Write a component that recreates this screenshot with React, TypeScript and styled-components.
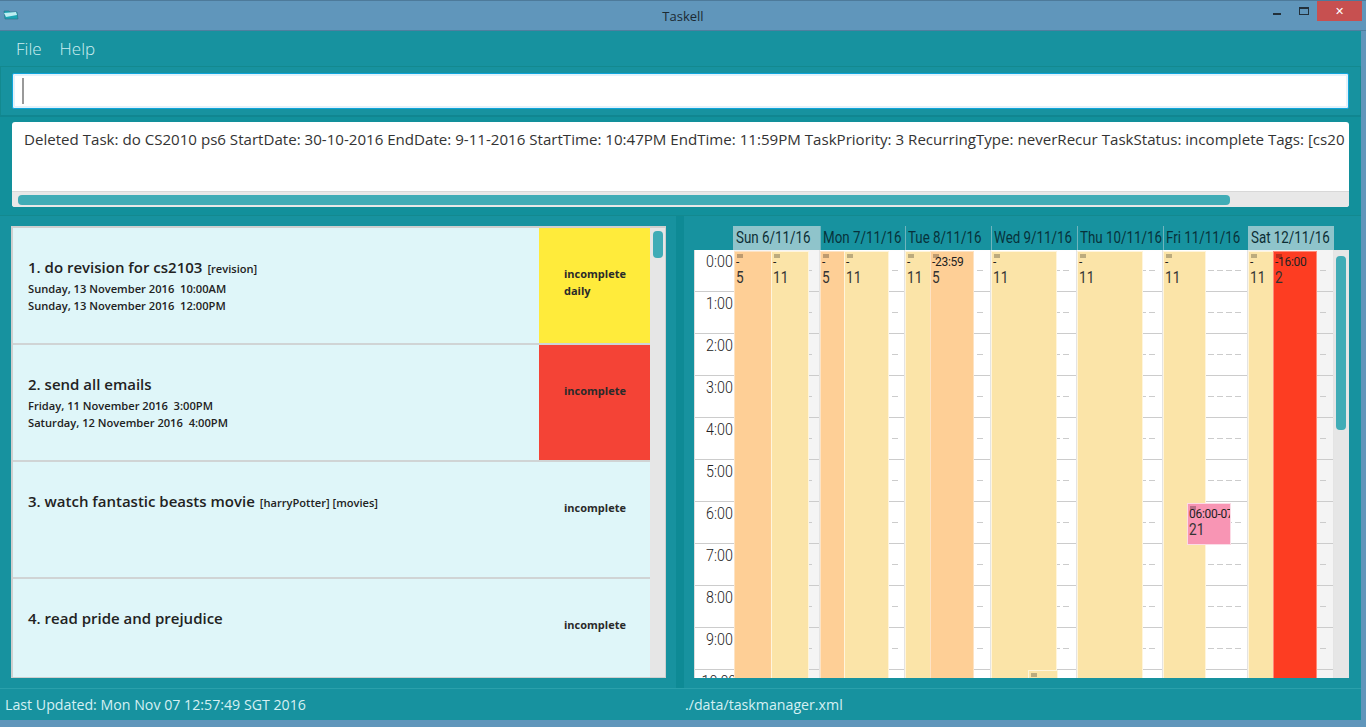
import { createGlobalStyle, styled } from "styled-components";

const GlobalStyle = createGlobalStyle`
  html, body { margin: 0; padding: 0; height: 100%; overflow: hidden; }
  body { font-family: "Open Sans", "Noto Sans", sans-serif; }
  * { box-sizing: border-box; }
`;

const Frame = styled.div`
  width: 1366px;
  height: 727px;
  background: #6096bb;
  display: flex;
  flex-direction: column;
  overflow: hidden;
`;

const TitleBar = styled.div`
  height: 31px;
  flex: none;
  position: relative;
  display: flex;
  align-items: center;
  justify-content: center;
  border-top: 1px solid #4d7a9a;
  border-bottom: 1px solid #4f7f9f;
  font-size: 13px;
  color: #1c2a33;
`;

const AppIcon = styled.svg`
  position: absolute;
  left: 3px;
  top: 8px;
`;

const WindowButtons = styled.div`
  position: absolute;
  right: 4px;
  top: 0;
  display: flex;
  align-items: flex-start;
`;

const MinButton = styled.div`
  width: 8px;
  height: 2px;
  background: #22303a;
  margin: 12px 18px 0 0;
`;

const MaxButton = styled.div`
  width: 10px;
  height: 8px;
  margin: 6px 8px 0 0;
  border: 1px solid #22303a;
  border-top-width: 2px;
`;

const CloseButton = styled.div`
  width: 45px;
  height: 20px;
  background: #c75050;
  color: #fff;
  font: 700 11px "DejaVu Sans", sans-serif;
  display: flex;
  align-items: center;
  justify-content: center;
`;

const Body = styled.div`
  width: 1361px;
  height: 689px;
  flex: none;
  background: #17929f;
  display: flex;
  flex-direction: column;
`;

const MenuBar = styled.div`
  height: 35px;
  flex: none;
  display: flex;
  align-items: center;
  gap: 18px;
  padding: 0 16px;
  font-size: 17px;
  font-weight: 300;
  color: #cdeef1;
`;

const CommandSection = styled.div`
  height: 49px;
  flex: none;
  padding: 6px 11px;
  border: 1px solid #13898f;
  border-width: 1px 1px 0 1px;
`;

const CommandInput = styled.div`
  height: 36px;
  background: #fff;
  border: 1px solid #0ea5dc;
  box-shadow: inset 0 0 0 2px #e3f2fa;
  border-radius: 2px;
  display: flex;
  align-items: center;
  padding-left: 9px;
`;

const Caret = styled.div`
  width: 2px;
  height: 26px;
  background: #999;
`;

const ResultSection = styled.div`
  height: 100px;
  flex: none;
  padding: 5px 12px 8px;
  background: #12909b;
  border-top: 2px solid #108690;
`;

const ResultBox = styled.div`
  height: 85px;
  background: #fff;
  border-radius: 3px;
  display: flex;
  flex-direction: column;
  overflow: hidden;
`;

const ResultText = styled.div`
  flex: 1;
  padding: 7px 0 0 12px;
  font-size: 15.1px;
  color: #333;
  white-space: nowrap;
  overflow: hidden;
`;

const HScrollTrack = styled.div`
  height: 16px;
  flex: none;
  background: #e8e8e8;
  border-top: 1px solid #d8d8d8;
  padding: 3px 4px 2px 6px;
`;

const HScrollThumb = styled.div`
  width: 1212px;
  height: 10px;
  border-radius: 4px;
  background: #40acb6;
`;

const Main = styled.div`
  height: 473px;
  flex: none;
  display: flex;
  border-top: 1px solid #13898f;
`;

const LeftPane = styled.div`
  width: 676px;
  flex: none;
  padding: 10px 10px 10px 11px;
`;

const ListBox = styled.div`
  height: 452px;
  display: flex;
  background: #dff6f9;
  border: 2px solid #cfcfcf;
  border-width: 2px 1px 1px 2px;
  overflow: hidden;
`;

const CardList = styled.div`
  width: 637px;
  flex: none;
`;

const Card = styled.div`
  height: 117px;
  display: flex;
  border-bottom: 2px solid #d0d4d5;
`;

const CardInfo = styled.div`
  flex: 1;
  padding: 28px 0 0 15px;
  color: #222;
`;

const CardTitle = styled.div`
  font-size: 15px;
  font-weight: 600;
  line-height: 22px;
  margin-bottom: 2px;
  white-space: nowrap;
`;

const Tags = styled.span`
  font-size: 11.1px;
  line-height: 1;
  margin-left: 5px;
`;

const CardDate = styled.div`
  font-size: 11.15px;
  font-weight: 600;
  line-height: 17px;
  white-space: pre;
`;

const StatusCell = styled.div<{ $color?: string }>`
  width: 111px;
  flex: none;
  padding: 37px 0 0 25px;
  background: ${(p) => p.$color ?? "transparent"};
  font-size: 11px;
  font-weight: 700;
  line-height: 17px;
  color: #2a2a2a;
`;

const VScrollTrack = styled.div`
  width: 15px;
  flex: none;
  background: #e6e6e6;
  padding: 3px 2px 0 3px;
`;

const VScrollThumb = styled.div<{ $height: number }>`
  height: ${(p) => p.$height}px;
  background: #40acb6;
  border-radius: 4px;
`;

const Splitter = styled.div`
  width: 8px;
  flex: none;
  background: #0e8a95;
`;

const RightPane = styled.div`
  flex: 1;
  padding: 10px 12px 10px 10px;
  display: flex;
  flex-direction: column;
`;

const DayHeader = styled.div`
  height: 24px;
  flex: none;
  display: flex;
  padding-left: 39px;
`;

const DayTitle = styled.div<{ $width: number; $weekend: boolean }>`
  width: ${(p) => p.$width}px;
  flex: none;
  padding-left: 2px;
  line-height: 23px;
  overflow: hidden;
  white-space: nowrap;
  color: ${(p) => (p.$weekend ? "#0c2e35" : "#07323b")};
  background: ${(p) => (p.$weekend ? "#8fc4cb" : "transparent")};
  border-left: 1px solid ${(p) => (p.$weekend ? "#8fc4cb" : "#6fb4bd")};
`;

const DayLabel = styled.span`
  display: inline-block;
  font: 400 17px/23px Roboto, sans-serif;
  transform: scaleX(0.785);
  transform-origin: left center;
`;

const Agenda = styled.div`
  height: 428px;
  flex: none;
  display: flex;
  background: #fff;
  overflow: hidden;
  border-left: 1px solid #ddd;
`;

const TimeColumn = styled.div`
  width: 39px;
  flex: none;
`;

const TimeCell = styled.div`
  height: 42px;
  padding-right: 1px;
  text-align: right;
  line-height: 22px;
  border-bottom: 1px solid #ccc;
`;

const TimeLabel = styled.span`
  display: inline-block;
  font: 300 17px/22px Roboto, sans-serif;
  color: #222;
  transform: scaleX(0.84);
  transform-origin: right center;
`;

const DayColumn = styled.div<{ $width: number; $weekend: boolean }>`
  width: ${(p) => p.$width}px;
  flex: none;
  position: relative;
  background: ${(p) => (p.$weekend ? "#f4f4f4" : "#fff")};
  border-right: 1px solid #e4e4e4;
`;

const HourCell = styled.div`
  height: 42px;
  border-bottom: 1px solid #ccc;
`;

const HalfLine = styled.div`
  height: 21px;
  margin-right: 6px;
  background: repeating-linear-gradient(90deg, #ccc 0 6px, transparent 6px 9px) left bottom / 100% 1px no-repeat;
`;

const kindColors = {
  orange: { bg: "#fecf96", edge: "#fde3c4" },
  cream: { bg: "#fbe4a8", edge: "#fff5dc" },
  red: { bg: "#fd3d22", edge: "#ff8a78" },
  pink: { bg: "#f895b4", edge: "#fcdbe6" },
};

type Kind = keyof typeof kindColors;

const Event = styled.div<{ $left: number; $top: number; $width: number; $height: number; $kind: Kind }>`
  position: absolute;
  left: ${(p) => p.$left}px;
  top: ${(p) => p.$top}px;
  width: ${(p) => p.$width}px;
  height: ${(p) => p.$height}px;
  background: ${(p) => kindColors[p.$kind].bg};
  border: 1px solid ${(p) => kindColors[p.$kind].edge};
  padding: 4px 0 0 1px;
  overflow: hidden;
  color: #222;
  white-space: nowrap;
`;

const EventTag = styled.div`
  position: absolute;
  left: 2px;
  top: 2px;
  width: 6px;
  height: 4px;
  background: rgba(0, 0, 0, 0.25);
`;

const EventTime = styled.div`
  font: 400 12px/13px Roboto, sans-serif;
  letter-spacing: -0.3px;
`;

const EventNumber = styled.div`
  font: 400 17px/17px Roboto, sans-serif;
  color: #333;
  transform: scaleX(0.8);
  transform-origin: left center;
`;

const AgendaScroll = styled.div`
  width: 15px;
  flex: none;
  background: #e6e6e6;
  padding: 6px 3px 0 2px;
`;

const StatusBar = styled.div`
  flex: 1;
  display: flex;
  align-items: center;
  border-top: 1px solid #2aa0ab;
  font-size: 14.2px;
  color: #d5f0f3;
  padding-left: 5px;
`;

const StatusLeft = styled.div`
  width: 680px;
  flex: none;
`;

type CalEvent = { left: number; top?: number; width: number; height?: number; kind: Kind; time: string; num?: string };

const days: { title: string; width: number; weekend: boolean; events: CalEvent[] }[] = [
  {
    title: "Sun 6/11/16",
    width: 86,
    weekend: true,
    events: [
      { left: 0, width: 38, kind: "orange", time: "-", num: "5" },
      { left: 37, width: 38, kind: "cream", time: "-", num: "11" },
    ],
  },
  {
    title: "Mon 7/11/16",
    width: 85,
    weekend: false,
    events: [
      { left: 0, width: 25, kind: "orange", time: "-", num: "5" },
      { left: 24, width: 45, kind: "cream", time: "-", num: "11" },
    ],
  },
  {
    title: "Tue 8/11/16",
    width: 86,
    weekend: false,
    events: [
      { left: 0, width: 26, kind: "cream", time: "-", num: "11" },
      { left: 25, width: 44, kind: "orange", time: "-23:59", num: "5" },
    ],
  },
  {
    title: "Wed 9/11/16",
    width: 86,
    weekend: false,
    events: [
      { left: 0, width: 66, kind: "cream", time: "-", num: "11" },
      { left: 37, top: 420, width: 30, height: 30, kind: "cream", time: "" },
    ],
  },
  {
    title: "Thu 10/11/16",
    width: 86,
    weekend: false,
    events: [{ left: 0, width: 66, kind: "cream", time: "-", num: "11" }],
  },
  {
    title: "Fri 11/11/16",
    width: 85,
    weekend: false,
    events: [
      { left: 0, width: 43, kind: "cream", time: "-", num: "11" },
      { left: 24, top: 253, width: 44, height: 42, kind: "pink", time: "06:00-07:00", num: "21" },
    ],
  },
  {
    title: "Sat 12/11/16",
    width: 86,
    weekend: true,
    events: [
      { left: 0, width: 26, kind: "cream", time: "-", num: "11" },
      { left: 25, width: 44, kind: "red", time: "-16:00", num: "2" },
    ],
  },
];

const hours = Array.from({ length: 11 }, (_, i) => i);

const tasks = [
  {
    title: "1. do revision for cs2103",
    tags: "[revision]",
    dates: ["Sunday, 13 November 2016  10:00AM", "Sunday, 13 November 2016  12:00PM"],
    status: ["incomplete", "daily"],
    color: "#ffeb3b",
  },
  {
    title: "2. send all emails",
    dates: ["Friday, 11 November 2016  3:00PM", "Saturday, 12 November 2016  4:00PM"],
    status: ["incomplete"],
    color: "#f44336",
  },
  {
    title: "3. watch fantastic beasts movie",
    tags: "[harryPotter] [movies]",
    dates: [],
    status: ["incomplete"],
  },
  {
    title: "4. read pride and prejudice",
    dates: [],
    status: ["incomplete"],
  },
];

export default function App() {
  return (
    <Frame>
      <GlobalStyle />
      <TitleBar>
        <AppIcon width="16" height="12" viewBox="0 0 16 12">
          <path d="M1 2h5l1 1h7l1 7H2z" fill="#1aa6b5" stroke="#2b6f80" strokeWidth="0.6" />
          <path d="M1 4l12-1 1 3-11 2z" fill="#bdeef2" />
        </AppIcon>
        Taskell
        <WindowButtons>
          <MinButton />
          <MaxButton />
          <CloseButton>✕</CloseButton>
        </WindowButtons>
      </TitleBar>
      <Body>
        <MenuBar>
          <span>File</span>
          <span>Help</span>
        </MenuBar>
        <CommandSection>
          <CommandInput>
            <Caret />
          </CommandInput>
        </CommandSection>
        <ResultSection>
          <ResultBox>
            <ResultText>
              Deleted Task: do CS2010 ps6 StartDate: 30-10-2016 EndDate: 9-11-2016 StartTime: 10:47PM EndTime: 11:59PM
              TaskPriority: 3 RecurringType: neverRecur TaskStatus: incomplete Tags: [cs20
            </ResultText>
            <HScrollTrack>
              <HScrollThumb />
            </HScrollTrack>
          </ResultBox>
        </ResultSection>
        <Main>
          <LeftPane>
            <ListBox>
              <CardList>
                {tasks.map((t) => (
                  <Card key={t.title}>
                    <CardInfo>
                      <CardTitle>
                        {t.title}
                        {t.tags && <Tags>{t.tags}</Tags>}
                      </CardTitle>
                      {t.dates.map((d) => (
                        <CardDate key={d}>{d}</CardDate>
                      ))}
                    </CardInfo>
                    <StatusCell $color={t.color}>
                      {t.status.map((s) => (
                        <div key={s}>{s}</div>
                      ))}
                    </StatusCell>
                  </Card>
                ))}
              </CardList>
              <VScrollTrack>
                <VScrollThumb $height={27} />
              </VScrollTrack>
            </ListBox>
          </LeftPane>
          <Splitter />
          <RightPane>
            <DayHeader>
              {days.map((d, i) => (
                <DayTitle key={d.title} $width={i === 0 ? 87 : d.width} $weekend={d.weekend}>
                  <DayLabel>{d.title}</DayLabel>
                </DayTitle>
              ))}
            </DayHeader>
            <Agenda>
              <TimeColumn>
                {hours.map((h) => (
                  <TimeCell key={h}>
                    <TimeLabel>{h}:00</TimeLabel>
                  </TimeCell>
                ))}
              </TimeColumn>
              {days.map((d) => (
                <DayColumn key={d.title} $width={d.width} $weekend={d.weekend}>
                  {hours.map((h) => (
                    <HourCell key={h}>
                      <HalfLine />
                    </HourCell>
                  ))}
                  {d.events.map((e) => (
                    <Event
                      key={e.left}
                      $left={e.left}
                      $top={e.top ?? 1}
                      $width={e.width}
                      $height={e.height ?? 440}
                      $kind={e.kind}
                    >
                      <EventTag />
                      <EventTime>{e.time}</EventTime>
                      <EventNumber>{e.num}</EventNumber>
                    </Event>
                  ))}
                </DayColumn>
              ))}
              <AgendaScroll>
                <VScrollThumb $height={174} />
              </AgendaScroll>
            </Agenda>
          </RightPane>
        </Main>
        <StatusBar>
          <StatusLeft>Last Updated: Mon Nov 07 12:57:49 SGT 2016</StatusLeft>
          <span>./data/taskmanager.xml</span>
        </StatusBar>
      </Body>
    </Frame>
  );
}
